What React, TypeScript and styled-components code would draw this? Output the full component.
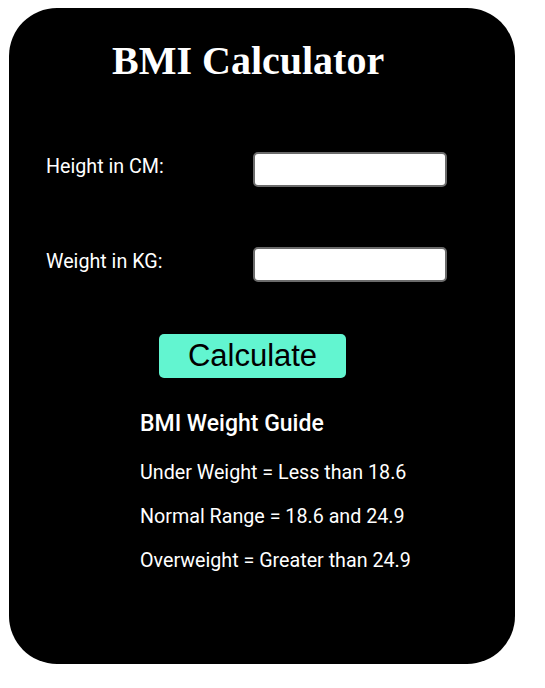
import React from "react";
import styled, { createGlobalStyle } from "styled-components";

const Global = createGlobalStyle`
  html, body { margin: 0; padding: 0; background: #ffffff; }
  body { padding: 8px 0 0 9px; }
`;

const Card = styled.div`
  box-sizing: border-box;
  width: 506px;
  height: 656px;
  background: #000000;
  border-radius: 48px;
  padding: 31px 0 0 37px;
  display: flex;
  flex-direction: column;
  color: #ffffff;
  font-family: Roboto, "Liberation Sans", sans-serif;
`;

const Title = styled.h1`
  margin: 0 0 0 66px;
  font-family: "Liberation Serif", "Times New Roman", serif;
  font-weight: 700;
  font-size: 40px;
  line-height: 44px;
`;

const Row = styled.div<{ $top: number }>`
  display: grid;
  grid-template-columns: 207px 194px;
  align-items: start;
  margin-top: ${(p) => p.$top}px;
`;

const Label = styled.label`
  font-size: 19.7px;
  line-height: 23px;
  padding-top: 3px;
`;

const Input = styled.input`
  box-sizing: border-box;
  width: 194px;
  height: 35px;
  border: 2px solid #6b6b6b;
  border-radius: 5px;
  background: #ffffff;
  outline: none;
`;

const Button = styled.button`
  box-sizing: border-box;
  margin: 52px 0 0 113px;
  width: 187px;
  height: 44px;
  background: #62f5d0;
  border: none;
  border-radius: 5px;
  font-family: "Liberation Sans", Arial, sans-serif;
  font-size: 31px;
  color: #000000;
  padding: 0;
  line-height: 44px;
`;

const Guide = styled.div`
  margin: 32px 0 0 94px;
  display: flex;
  flex-direction: column;
`;

const GuideTitle = styled.h3`
  margin: 0 0 24px 0;
  font-size: 23px;
  font-weight: 500;
  line-height: 27px;
`;

const GuideItem = styled.p`
  margin: 0 0 20.8px 0;
  font-size: 19.7px;
  line-height: 23px;
`;

export default function App() {
  return (
    <>
      <Global />
      <Card>
        <Title>BMI Calculator</Title>
        <Row $top={69}>
          <Label>Height in CM:</Label>
          <Input type="text" />
        </Row>
        <Row $top={60}>
          <Label>Weight in KG:</Label>
          <Input type="text" />
        </Row>
        <div>
          <Button>Calculate</Button>
        </div>
        <Guide>
          <GuideTitle>BMI Weight Guide</GuideTitle>
          <GuideItem>Under Weight = Less than 18.6</GuideItem>
          <GuideItem>Normal Range = 18.6 and 24.9</GuideItem>
          <GuideItem>Overweight = Greater than 24.9</GuideItem>
        </Guide>
      </Card>
    </>
  );
}
